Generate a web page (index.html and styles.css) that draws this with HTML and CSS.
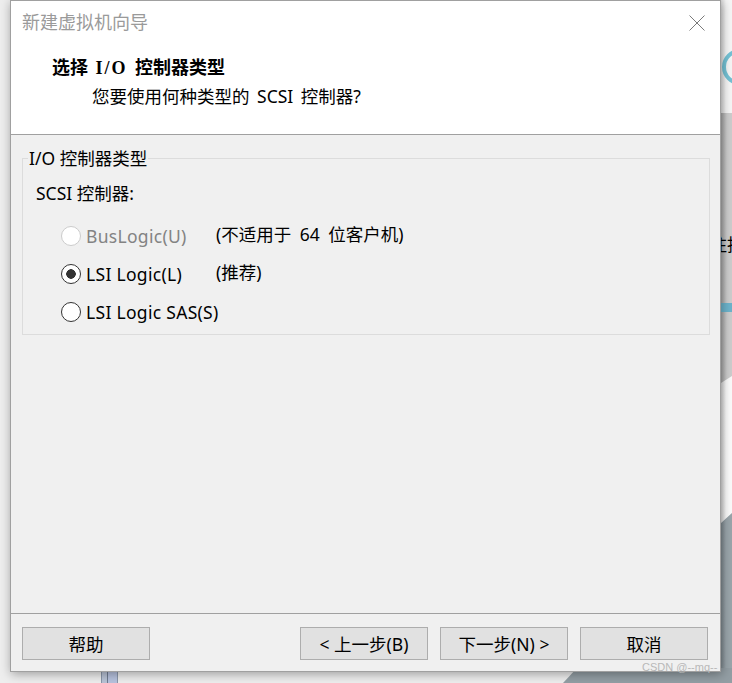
FILE: index.html
```html
<!DOCTYPE html>
<html lang="zh-CN">

<head>
    <meta charset="UTF-8" />
    <title>新建虚拟机向导</title>
    <link rel="stylesheet" href="styles.css">
</head>

<body>
    <div class="desktop">
        <div class="bg-right-top"></div>
        <div class="bg-ring"></div>
        <div class="bg-right-mid"></div>
        <div class="bg-text">注指</div>
        <div class="bg-teal"></div>
        <div class="bg-white"></div>
        <div class="bg-dark"></div>
        <div class="bg-bottom-dark"></div>
        <div class="bg-taskbar"></div>
    </div>

    <div class="dialog">
        <div class="dialog-header">
            <div class="title-row">
                <span class="title">新建虚拟机向导</span>
                <span class="close">
                    <svg width="16" height="16" viewBox="0 0 16 16">
                        <path d="M0.5 0.5 L15.5 15.5 M15.5 0.5 L0.5 15.5" stroke="#7a7a7a" stroke-width="1" fill="none" />
                    </svg>
                </span>
            </div>
            <h1 class="step-title">选择 <span class="latin">I/O</span> 控制器类型</h1>
            <p class="step-desc">您要使用何种类型的 SCSI 控制器?</p>
        </div>

        <div class="dialog-body">
            <fieldset class="group">
                <legend>I/O 控制器类型</legend>
                <div class="field-label">SCSI 控制器:</div>
                <div class="options">
                    <label class="option disabled">
                        <input type="radio" name="scsi" disabled />
                        <span>BusLogic(U)</span>
                    </label>
                    <span class="note">(不适用于 64 位客户机)</span>

                    <label class="option">
                        <input type="radio" name="scsi" checked />
                        <span>LSI Logic(L)</span>
                    </label>
                    <span class="note">(推荐)</span>

                    <label class="option">
                        <input type="radio" name="scsi" />
                        <span>LSI Logic SAS(S)</span>
                    </label>
                    <span class="note"></span>
                </div>
            </fieldset>
        </div>

        <div class="dialog-footer">
            <button class="btn">帮助</button>
            <div class="nav">
                <button class="btn">&lt; 上一步(B)</button>
                <button class="btn">下一步(N) &gt;</button>
                <button class="btn">取消</button>
            </div>
        </div>
    </div>

    <div class="watermark">CSDN @--mq--</div>
</body>

</html>
```

FILE: styles.css
```css
* {
    box-sizing: border-box;
    margin: 0;
    padding: 0;
}

body {
    position: relative;
    width: 732px;
    height: 683px;
    overflow: hidden;
    background-color: #eeeeee;
    font-family: 'Noto Sans', 'Noto Sans CJK SC', sans-serif;
    font-size: 17.5px;
    color: #000;
}

/* desktop behind the wizard */
.desktop div {
    position: absolute;
}

.bg-right-top {
    left: 721px;
    top: 0;
    width: 11px;
    height: 113px;
    background: linear-gradient(to right, #dcdcdc, #f6f6f6 5px);
}

.bg-ring {
    left: 722px;
    top: 49px;
    width: 36px;
    height: 36px;
    border: 4px solid #74c2d5;
    border-radius: 50%;
}

.bg-right-mid {
    left: 721px;
    top: 113px;
    width: 11px;
    height: 270px;
    background: linear-gradient(to right, #a4a4a4, #cdcdcd 6px);
}

.bg-text {
    left: 710px;
    top: 233px;
    font-size: 17px;
    line-height: 24px;
    white-space: nowrap;
    color: #000;
}

.bg-teal {
    left: 721px;
    top: 303px;
    width: 11px;
    height: 9px;
    background-color: #6db4cc;
}

.bg-white {
    left: 721px;
    top: 376px;
    width: 11px;
    height: 147px;
    background: linear-gradient(to right, #d6d6d6, #fbfbfb 5px);
    clip-path: polygon(0 7px, 100% 0, 100% 137px, 0 100%);
}

.bg-dark {
    left: 721px;
    top: 513px;
    width: 11px;
    height: 170px;
    background: linear-gradient(to right, #7f8a90, #9aa5ab 5px);
    clip-path: polygon(0 10px, 100% 0, 100% 100%, 0 100%);
}

.bg-bottom-dark {
    left: 563px;
    top: 668px;
    width: 169px;
    height: 15px;
    background-color: #939ea4;
    clip-path: polygon(14px 0, 100% 0, 100% 100%, 0 100%);
}

.bg-taskbar {
    left: 101px;
    top: 672px;
    width: 17px;
    height: 11px;
    background: linear-gradient(to right, #8b97ab 0 1px, #b9c3d6 1px 6px, #6f7b90 6px 7px, #b7c2de 7px 16px, #8b97ab 16px);
}

/* wizard window */
.dialog {
    position: relative;
    z-index: 1;
    display: flex;
    flex-direction: column;
    width: 711px;
    height: 672px;
    margin-left: 10px;
    border: 1px solid #a0a0a0;
    background-color: #f0f0f0;
    box-shadow: 1px 2px 10px rgba(0, 0, 0, 0.35);
}

.dialog-header {
    height: 134px;
    padding: 9px 15px 0 11px;
    background-color: #ffffff;
    border-bottom: 1px solid #a0a0a0;
}

.title-row {
    display: flex;
    justify-content: space-between;
    align-items: flex-start;
    height: 24px;
}

.title {
    font-size: 18px;
    line-height: 24px;
    color: #9a9a9a;
}

.close {
    display: block;
    width: 16px;
    height: 16px;
    margin-top: 5px;
}

.close svg {
    display: block;
}

.step-title {
    margin: 22px 0 0 30px;
    font-family: 'Liberation Serif', 'Noto Sans CJK SC', serif;
    font-size: 18px;
    line-height: 24px;
    font-weight: bold;
    word-spacing: 3px;
}

.step-title .latin {
    letter-spacing: 2px;
}

.step-desc {
    margin: 4px 0 0 70px;
    line-height: 24px;
    word-spacing: 3px;
}

.dialog-body {
    flex: 1;
    padding: 13px 10px 0 11px;
}

.group {
    padding: 13px 0 3px 0;
    border: 1px solid #dcdcdc;
}

.group legend {
    margin-left: 5px;
    padding: 0 1px;
    line-height: 20px;
}

.field-label {
    margin-left: 13px;
    line-height: 24px;
}

.options {
    display: grid;
    grid-template-columns: 155px auto;
    margin: 12px 0 0 38px;
}

.option {
    display: flex;
    align-items: center;
    gap: 5px;
    height: 38px;
    white-space: nowrap;
    letter-spacing: 0.3px;
}

.option input {
    appearance: none;
    flex-shrink: 0;
    width: 20px;
    height: 20px;
    margin: 0;
    border: 1px solid #333333;
    border-radius: 50%;
    background-color: #ffffff;
}

.option input:checked {
    background: radial-gradient(circle, #333333 0 4.5px, #ffffff 5px);
}

.option.disabled {
    color: #838383;
}

.option.disabled input {
    border-color: #cccccc;
}

.note {
    line-height: 34px;
    word-spacing: 4px;
}

.dialog-footer {
    display: flex;
    justify-content: space-between;
    height: 58px;
    padding: 13px 12px 0 11px;
    border-top: 1px solid #a0a0a0;
}

.nav {
    display: flex;
    gap: 12px;
}

.btn {
    width: 128px;
    height: 33px;
    font-family: inherit;
    font-size: 17.5px;
    color: #000;
    background-color: #e1e1e1;
    border: 1px solid #adadad;
}

.watermark {
    position: absolute;
    z-index: 2;
    left: 642px;
    top: 660px;
    font-family: 'Liberation Sans', sans-serif;
    font-size: 11px;
    line-height: 14px;
    color: #b8b8b8;
}
```
